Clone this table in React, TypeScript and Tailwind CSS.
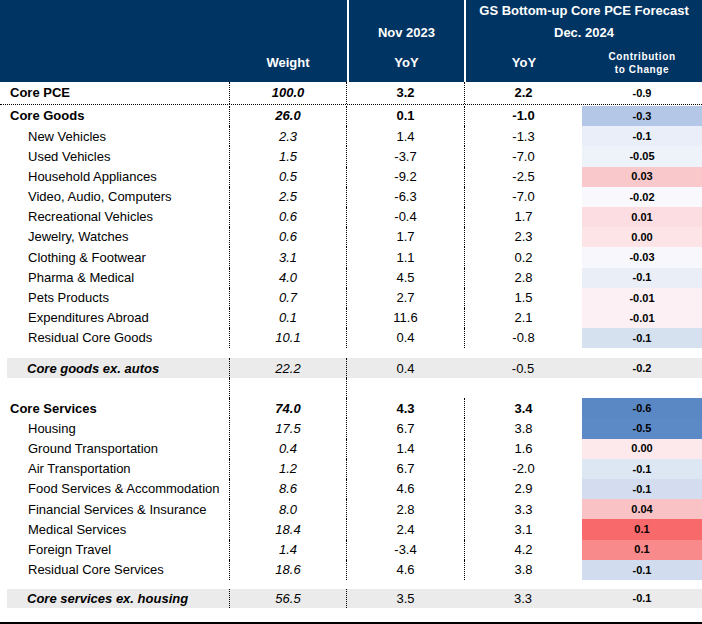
import React from "react";

type Item = {
  label: string;
  weight: string;
  nov: string;
  gs: string;
  contrib: string;
  fill: string;
};

const goods: Item[] = [
  { label: "New Vehicles", weight: "2.3", nov: "1.4", gs: "-1.3", contrib: "-0.1", fill: "bg-[#e9eef8]" },
  { label: "Used Vehicles", weight: "1.5", nov: "-3.7", gs: "-7.0", contrib: "-0.05", fill: "bg-[#eef2f9]" },
  { label: "Household Appliances", weight: "0.5", nov: "-9.2", gs: "-2.5", contrib: "0.03", fill: "bg-[#f9c8cb]" },
  { label: "Video, Audio, Computers", weight: "2.5", nov: "-6.3", gs: "-7.0", contrib: "-0.02", fill: "bg-[#f9f9fd]" },
  { label: "Recreational Vehicles", weight: "0.6", nov: "-0.4", gs: "1.7", contrib: "0.01", fill: "bg-[#fcdde1]" },
  { label: "Jewelry, Watches", weight: "0.6", nov: "1.7", gs: "2.3", contrib: "0.00", fill: "bg-[#fde4e7]" },
  { label: "Clothing & Footwear", weight: "3.1", nov: "1.1", gs: "0.2", contrib: "-0.03", fill: "bg-[#f7f7fc]" },
  { label: "Pharma & Medical", weight: "4.0", nov: "4.5", gs: "2.8", contrib: "-0.1", fill: "bg-[#e9eef7]" },
  { label: "Pets Products", weight: "0.7", nov: "2.7", gs: "1.5", contrib: "-0.01", fill: "bg-[#fcf0f4]" },
  { label: "Expenditures Abroad", weight: "0.1", nov: "11.6", gs: "2.1", contrib: "-0.01", fill: "bg-[#fcf0f4]" },
  { label: "Residual Core Goods", weight: "10.1", nov: "0.4", gs: "-0.8", contrib: "-0.1", fill: "bg-[#d6e1f0]" },
];

const services: Item[] = [
  { label: "Housing", weight: "17.5", nov: "6.7", gs: "3.8", contrib: "-0.5", fill: "bg-[#5b8ac6]" },
  { label: "Ground Transportation", weight: "0.4", nov: "1.4", gs: "1.6", contrib: "0.00", fill: "bg-[#fde8eb]" },
  { label: "Air Transportation", weight: "1.2", nov: "6.7", gs: "-2.0", contrib: "-0.1", fill: "bg-[#dde6f3]" },
  { label: "Food Services & Accommodation", weight: "8.6", nov: "4.6", gs: "2.9", contrib: "-0.1", fill: "bg-[#d3ddef]" },
  { label: "Financial Services & Insurance", weight: "8.0", nov: "2.8", gs: "3.3", contrib: "0.04", fill: "bg-[#f9c3c6]" },
  { label: "Medical Services", weight: "18.4", nov: "2.4", gs: "3.1", contrib: "0.1", fill: "bg-[#f8696b]" },
  { label: "Foreign Travel", weight: "1.4", nov: "-3.4", gs: "4.2", contrib: "0.1", fill: "bg-[#f98a8c]" },
  { label: "Residual Core Services", weight: "18.6", nov: "4.6", gs: "3.8", contrib: "-0.1", fill: "bg-[#d1dcee]" },
];

const dot = "border-l border-dotted border-black";

function Row({
  item,
  kind,
  className = "",
}: {
  item: Item;
  kind: "total" | "item";
  className?: string;
}) {
  const bold = kind === "total";
  return (
    <div className={`grid grid-cols-[229px_117px_118px_118px_120px] text-[13px] text-black ${className}`}>
      <div className={`flex items-center ${bold ? "pl-[10px] font-bold" : "pl-[28px]"}`}>{item.label}</div>
      <div className={`flex items-center justify-center italic ${bold ? "font-bold" : ""} ${dot}`}>{item.weight}</div>
      <div className={`flex items-center justify-center ${bold ? "font-bold" : ""} ${dot}`}>{item.nov}</div>
      <div className={`flex items-center justify-center ${bold ? "font-bold" : ""} ${dot}`}>{item.gs}</div>
      <div className={`flex items-center justify-center text-[11px] font-bold ${item.fill}`}>{item.contrib}</div>
    </div>
  );
}

function Band({ item, className = "" }: { item: Item; className?: string }) {
  return (
    <div className={`pl-[7px] ${className}`}>
      <div className="grid h-full grid-cols-[222px_117px_118px_118px_120px] bg-[#ebebeb] text-[13px] text-black">
        <div className="flex items-center pl-[20px] font-bold italic">{item.label}</div>
        <div className={`flex items-center justify-center italic ${dot}`}>{item.weight}</div>
        <div className={`flex items-center justify-center ${dot}`}>{item.nov}</div>
        <div className="flex items-center justify-center">{item.gs}</div>
        <div className="flex items-center justify-center text-[11px] font-bold">{item.contrib}</div>
      </div>
    </div>
  );
}

export default function App() {
  return (
    <div className="h-[624px] w-[702px] overflow-hidden bg-white font-['Liberation_Sans',Arial,sans-serif]">
      {/* header */}
      <div className="flex h-[82px] gap-[2px] text-[13px] font-bold text-white">
        <div className="grid w-[347px] grid-cols-[229px_118px] bg-[#003462]">
          <div />
          <div className="flex flex-col">
            <div className="h-[44px]" />
            <div className="flex flex-1 items-center justify-center">Weight</div>
          </div>
        </div>
        <div className="flex w-[115px] flex-col bg-[#003462]">
          <div className="h-[22px]" />
          <div className="flex h-[22px] items-center justify-center">Nov 2023</div>
          <div className="flex flex-1 items-center justify-center">YoY</div>
        </div>
        <div className="flex flex-1 flex-col bg-[#003462]">
          <div className="flex h-[22px] items-center justify-center">GS Bottom-up Core PCE Forecast</div>
          <div className="flex h-[22px] items-center justify-center">Dec. 2024</div>
          <div className="grid flex-1 grid-cols-[116px_120px]">
            <div className="flex items-center justify-center">YoY</div>
            <div className="flex flex-col items-center justify-center text-[10px] leading-[13px] tracking-[0.6px]">
              <span>Contribution</span>
              <span>to Change</span>
            </div>
          </div>
        </div>
      </div>

      {/* Core PCE */}
      <Row
        kind="total"
        className="h-[23px] border-b border-dotted border-black"
        item={{ label: "Core PCE", weight: "100.0", nov: "3.2", gs: "2.2", contrib: "-0.9", fill: "" }}
      />
      <div className="h-[1px]" />

      {/* goods */}
      <Row
        kind="total"
        className="h-[20.2px]"
        item={{ label: "Core Goods", weight: "26.0", nov: "0.1", gs: "-1.0", contrib: "-0.3", fill: "bg-[#b4c7e7]" }}
      />
      {goods.map((g) => (
        <Row key={g.label} kind="item" item={g} className="h-[20.2px]" />
      ))}
      <div className="h-[10px]" />
      <Band
        className="h-[20px]"
        item={{ label: "Core goods ex. autos", weight: "22.2", nov: "0.4", gs: "-0.5", contrib: "-0.2", fill: "" }}
      />
      <div className="grid h-[20px] grid-cols-[229px_117px_118px_118px_120px]">
        <div />
        <div className={dot} />
        <div className={dot} />
        <div />
        <div />
      </div>

      {/* services */}
      <Row
        kind="total"
        className="h-[20.2px]"
        item={{ label: "Core Services", weight: "74.0", nov: "4.3", gs: "3.4", contrib: "-0.6", fill: "bg-[#5a88c5]" }}
      />
      {services.map((s) => (
        <Row key={s.label} kind="item" item={s} className="h-[20.2px]" />
      ))}
      <div className="h-[9px]" />
      <Band
        className="h-[19px]"
        item={{ label: "Core services ex. housing", weight: "56.5", nov: "3.5", gs: "3.3", contrib: "-0.1", fill: "" }}
      />
      <div className="h-[14px]" />
      <div className="h-[3px] bg-black" />
    </div>
  );
}
